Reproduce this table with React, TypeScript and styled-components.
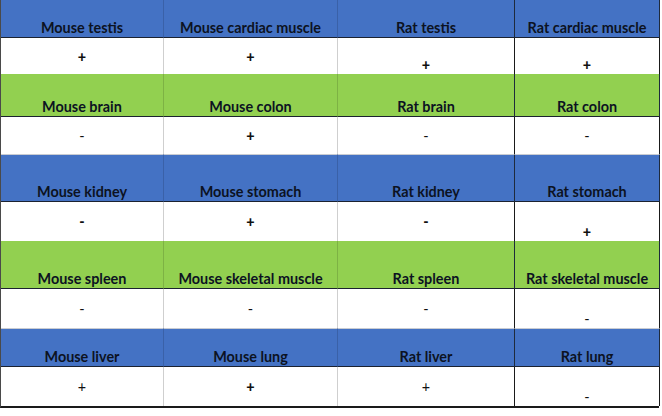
import React from "react";
import styled, { createGlobalStyle } from "styled-components";

const Global = createGlobalStyle`
  html, body { margin: 0; padding: 0; background: #fff; }
  body { font-family: "Lato", "Liberation Sans", sans-serif; }
`;

type Tone = "blue" | "green";

interface Value {
  v: string;
  bottom?: boolean;
  bold?: boolean;
}

interface Section {
  tone: Tone;
  headerH: number;
  valueH: number;
  headers: string[];
  values: Value[];
}

const sections: Section[] = [
  {
    tone: "blue",
    headerH: 38,
    valueH: 36,
    headers: ["Mouse testis", "Mouse cardiac muscle", "Rat testis", "Rat cardiac muscle"],
    values: [
      { v: "+", bold: true },
      { v: "+", bold: true },
      { v: "+", bold: true, bottom: true },
      { v: "+", bold: true, bottom: true },
    ],
  },
  {
    tone: "green",
    headerH: 43,
    valueH: 37,
    headers: ["Mouse brain", "Mouse colon", "Rat brain", "Rat colon"],
    values: [{ v: "-" }, { v: "+", bold: true }, { v: "-" }, { v: "-" }],
  },
  {
    tone: "blue",
    headerH: 48,
    valueH: 39,
    headers: ["Mouse kidney", "Mouse stomach", "Rat kidney", "Rat stomach"],
    values: [
      { v: "-", bold: true },
      { v: "+", bold: true },
      { v: "-", bold: true },
      { v: "+", bold: true, bottom: true },
    ],
  },
  {
    tone: "green",
    headerH: 48,
    valueH: 39,
    headers: ["Mouse spleen", "Mouse skeletal muscle", "Rat spleen", "Rat skeletal muscle"],
    values: [{ v: "-" }, { v: "-" }, { v: "-" }, { v: "-", bottom: true }],
  },
  {
    tone: "blue",
    headerH: 39,
    valueH: 39,
    headers: ["Mouse liver", "Mouse lung", "Rat liver", "Rat lung"],
    values: [{ v: "+" }, { v: "+", bold: true }, { v: "+" }, { v: "-", bottom: true }],
  },
];

const toneColor: Record<Tone, string> = {
  blue: "#4472c4",
  green: "#92d050",
};

const Table = styled.div`
  display: grid;
  grid-template-columns: 163px 174px 177px 145px;
  width: 659px;
  border-left: 1px solid #4a4a4a;
  border-bottom: 2px solid #1a1a1a;
  box-sizing: border-box;
`;

const HeaderCell = styled.div<{ $tone: Tone; $h: number; $col: number; $first: boolean }>`
  box-sizing: border-box;
  height: ${(p) => p.$h}px;
  background: ${(p) => toneColor[p.$tone]};
  display: flex;
  align-items: flex-end;
  justify-content: center;
  padding-bottom: 1px;
  font-weight: 700;
  font-size: 14.4px;
  line-height: 17px;
  color: #0c1222;
  white-space: nowrap;
  border-bottom: 1px solid #1b2230;
  border-top: ${(p) => (p.$first ? "none" : p.$tone === "blue" ? "1px solid #c9ccd2" : "none")};
  border-right: 1px solid
    ${(p) => (p.$col >= 2 ? "#1e2a3c" : "rgba(0,0,0,0.14)")};
`;

const ValueCell = styled.div<{ $h: number; $col: number; $bottom: boolean; $bold: boolean }>`
  box-sizing: border-box;
  height: ${(p) => p.$h}px;
  background: #fff;
  display: flex;
  align-items: ${(p) => (p.$bottom ? "flex-end" : "center")};
  justify-content: center;
  padding-bottom: ${(p) => (p.$bottom ? "1px" : "0")};
  font-family: "Lato", "Liberation Sans", sans-serif;
  font-weight: ${(p) => (p.$bold ? 900 : 400)};
  font-size: 14.4px;
  line-height: 17px;
  color: #111;
  border-right: 1px solid ${(p) => (p.$col >= 2 ? "#1a1a1a" : "#cfcfcf")};
`;

export default function App() {
  return (
    <>
      <Global />
      <Table>
        {sections.map((s, si) => (
          <React.Fragment key={si}>
            {s.headers.map((h, ci) => (
              <HeaderCell key={`h${ci}`} $tone={s.tone} $h={s.headerH} $col={ci} $first={si === 0}>
                {h}
              </HeaderCell>
            ))}
            {s.values.map((v, ci) => (
              <ValueCell
                key={`v${ci}`}
                $h={s.valueH}
                $col={ci}
                $bottom={!!v.bottom}
                $bold={!!v.bold}
              >
                {v.v}
              </ValueCell>
            ))}
          </React.Fragment>
        ))}
      </Table>
    </>
  );
}
